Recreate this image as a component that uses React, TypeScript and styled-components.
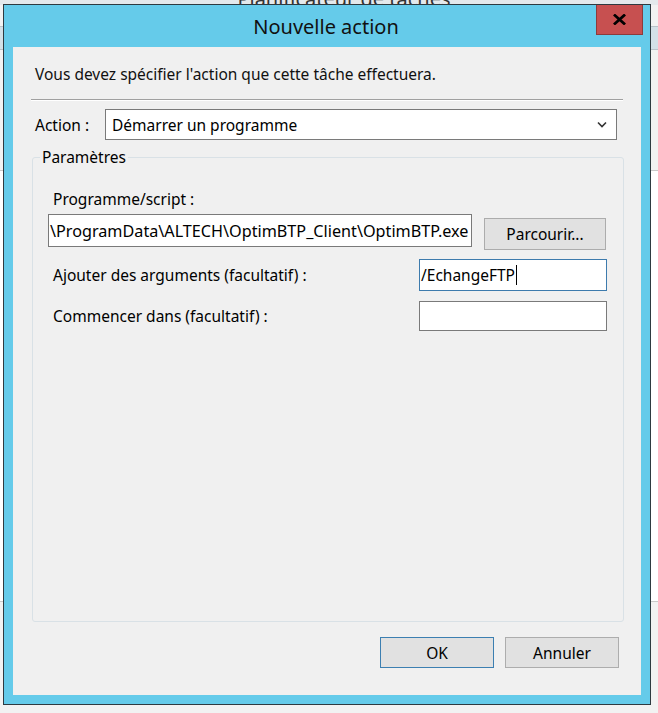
import styled, { createGlobalStyle } from 'styled-components'

const GlobalStyle = createGlobalStyle`
  html, body {
    margin: 0;
    padding: 0;
    background: #f2f2f2;
  }
  body {
    font-family: "Noto Sans", "Open Sans", sans-serif;
    font-size: 15.5px;
    color: #000;
  }
`;

function CloseIcon() {
  return (
    <svg width="13" height="11" viewBox="0 0 13 11">
      <path d="M2 1.5 L11 9.5 M11 1.5 L2 9.5" stroke="#000" strokeWidth="2.8" strokeLinecap="square" />
    </svg>
  )
}

function Chevron() {
  return (
    <svg width="10" height="7" viewBox="0 0 10 7">
      <polyline points="1,1.5 5,5.5 9,1.5" fill="none" stroke="#333" strokeWidth="1.6" />
    </svg>
  )
}

function App() {
  return (
    <>
      <GlobalStyle />
      <StDesktop>
        <StBackWindow>
          <StBackTitle>Planificateur de tâches</StBackTitle>
          <StBackBand />
          <StBackPanel />
        </StBackWindow>

        <StDialog>
          <StTitleBar>
            <StTitle>Nouvelle action</StTitle>
            <StCloseButton type='button'><CloseIcon /></StCloseButton>
          </StTitleBar>

          <StClient>
            <StIntro>Vous devez spécifier l'action que cette tâche effectuera.</StIntro>
            <StSeparator />

            <StActionRow>
              <StActionLabel>Action :</StActionLabel>
              <StSelect>
                <span>Démarrer un programme</span>
                <Chevron />
              </StSelect>
            </StActionRow>

            <StGroup>
              <StLegend>Paramètres</StLegend>
              <StFieldLabel>Programme/script :</StFieldLabel>
              <StProgramRow>
                <StTextBox $width={424} $height={33} $size={16.2}>\ProgramData\ALTECH\OptimBTP_Client\OptimBTP.exe</StTextBox>
                <StBrowseButton type='button'>Parcourir...</StBrowseButton>
              </StProgramRow>
              <StArgRow $top={9}>
                <StFieldLabel>Ajouter des arguments (facultatif) :</StFieldLabel>
                <StTextBox $width={188} $height={32} $focused>/EchangeFTP<StCaret /></StTextBox>
              </StArgRow>
              <StArgRow $top={10}>
                <StFieldLabel>Commencer dans (facultatif) :</StFieldLabel>
                <StTextBox $width={188} $height={30} />
              </StArgRow>
            </StGroup>

            <StButtonBar>
              <StButton type='button' $primary>OK</StButton>
              <StButton type='button'>Annuler</StButton>
            </StButtonBar>
          </StClient>
        </StDialog>
      </StDesktop>
    </>
  )
}

export default App

const StDesktop = styled.div`
  position: relative;
  width: 658px;
  height: 713px;
  overflow: hidden;
  background: #f2f2f2;
`;

const StBackWindow = styled.div`
  position: absolute;
  inset: 0;
  display: flex;
  flex-direction: column;
`;

const StBackTitle = styled.div`
  margin-top: -15px;
  height: 20px;
  text-align: center;
  padding-left: 30px;
  font-size: 20px;
  color: #333;
  background: #e4e9ec;
`;

const StBackBand = styled.div`
  height: 22px;
  margin-top: 21px;
  background: #d3e0e7;
  border-top: 1px solid #b9c3c9;
  border-bottom: 1px solid #b9c3c9;
`;

const StBackPanel = styled.div`
  margin-top: 120px;
  height: 430px;
  background: #fff;
  border-top: 1px solid #c9c9c9;
  border-bottom: 1px solid #c9c9c9;
`;

const StDialog = styled.div`
  position: absolute;
  left: 3px;
  top: 4px;
  width: 648px;
  height: 701px;
  box-sizing: border-box;
  border: 1px solid #2e3a40;
  background: #65cbea;
  display: flex;
  flex-direction: column;
`;

const StTitleBar = styled.div`
  position: relative;
  height: 42px;
  flex: none;
  display: flex;
  align-items: center;
  justify-content: center;
`;

const StTitle = styled.div`
  font-size: 20px;
  color: #111;
  margin-left: -2px;
`;

const StCloseButton = styled.button`
  position: absolute;
  top: 0;
  right: 7px;
  width: 47px;
  height: 30px;
  box-sizing: border-box;
  padding: 0;
  border: 1px solid #8d3b3b;
  border-top: none;
  background: #c75050;
  display: flex;
  align-items: center;
  justify-content: center;
`;

const StClient = styled.div`
  flex: 1;
  margin: 0 9px 9px 9px;
  background: #f0f0f0;
  padding: 0 17px 27px 18px;
  display: flex;
  flex-direction: column;
`;

const StIntro = styled.div`
  margin-top: 18px;
  padding-left: 4px;
  line-height: 18px;
  color: #111;
`;

const StSeparator = styled.div`
  margin: 16px 1px 0 0;
  border-top: 1px solid #a0a0a0;
  border-bottom: 1px solid #ffffff;
`;

const StActionRow = styled.div`
  display: flex;
  align-items: center;
  margin-top: 8px;
  padding-right: 7px;
`;

const StActionLabel = styled.div`
  width: 70px;
  padding-left: 4px;
  line-height: 18px;
  white-space: nowrap;
`;

const StSelect = styled.div`
  flex: 1;
  height: 31px;
  box-sizing: border-box;
  border: 1px solid #7a7a7a;
  background: #fff;
  display: flex;
  align-items: center;
  justify-content: space-between;
  padding: 0 9px 0 6px;
`;

const StGroup = styled.fieldset`
  flex: 1;
  margin: 8px 0 0 1px;
  padding: 24px 16px 0 15px;
  border: 1px solid #d9e1e6;
  border-radius: 3px;
  min-width: 0;
`;

const StLegend = styled.legend`
  margin-left: -8px;
  padding: 0 2px;
  line-height: 18px;
`;

const StFieldLabel = styled.div`
  padding-left: 5px;
  line-height: 18px;
`;

const StProgramRow = styled.div`
  display: flex;
  align-items: flex-start;
  gap: 12px;
  margin-top: 6px;
`;

const StArgRow = styled.div<{ $top: number }>`
  display: flex;
  align-items: center;
  justify-content: space-between;
  margin-top: ${(p) => p.$top}px;
`;

const StTextBox = styled.div<{ $width: number; $height: number; $focused?: boolean; $size?: number }>`
  width: ${(p) => p.$width}px;
  height: ${(p) => p.$height}px;
  box-sizing: border-box;
  flex: none;
  border: 1px solid ${(p) => (p.$focused ? '#3d7bad' : '#7a7a7a')};
  background: #fff;
  padding: 0 1px;
  display: flex;
  align-items: center;
  white-space: nowrap;
  overflow: hidden;
  font-size: ${(p) => p.$size ?? 15.5}px;
`;

const StCaret = styled.span`
  display: inline-block;
  width: 1px;
  height: 20px;
  margin-left: 1px;
  background: #000;
`;

const StBrowseButton = styled.button`
  margin-top: 4px;
  width: 122px;
  height: 32px;
  box-sizing: border-box;
  border: 1px solid #acacac;
  background: #e1e1e1;
  font: inherit;
  color: #000;
  padding: 0;
`;

const StButtonBar = styled.div`
  display: flex;
  justify-content: flex-end;
  gap: 11px;
  margin-top: 15px;
  padding-right: 5px;
`;

const StButton = styled.button<{ $primary?: boolean }>`
  width: 114px;
  height: 31px;
  box-sizing: border-box;
  border: 1px solid ${(p) => (p.$primary ? '#3c7fb1' : '#adadad')};
  background: #e1e1e1;
  font: inherit;
  color: #000;
  padding: 0;
`;
